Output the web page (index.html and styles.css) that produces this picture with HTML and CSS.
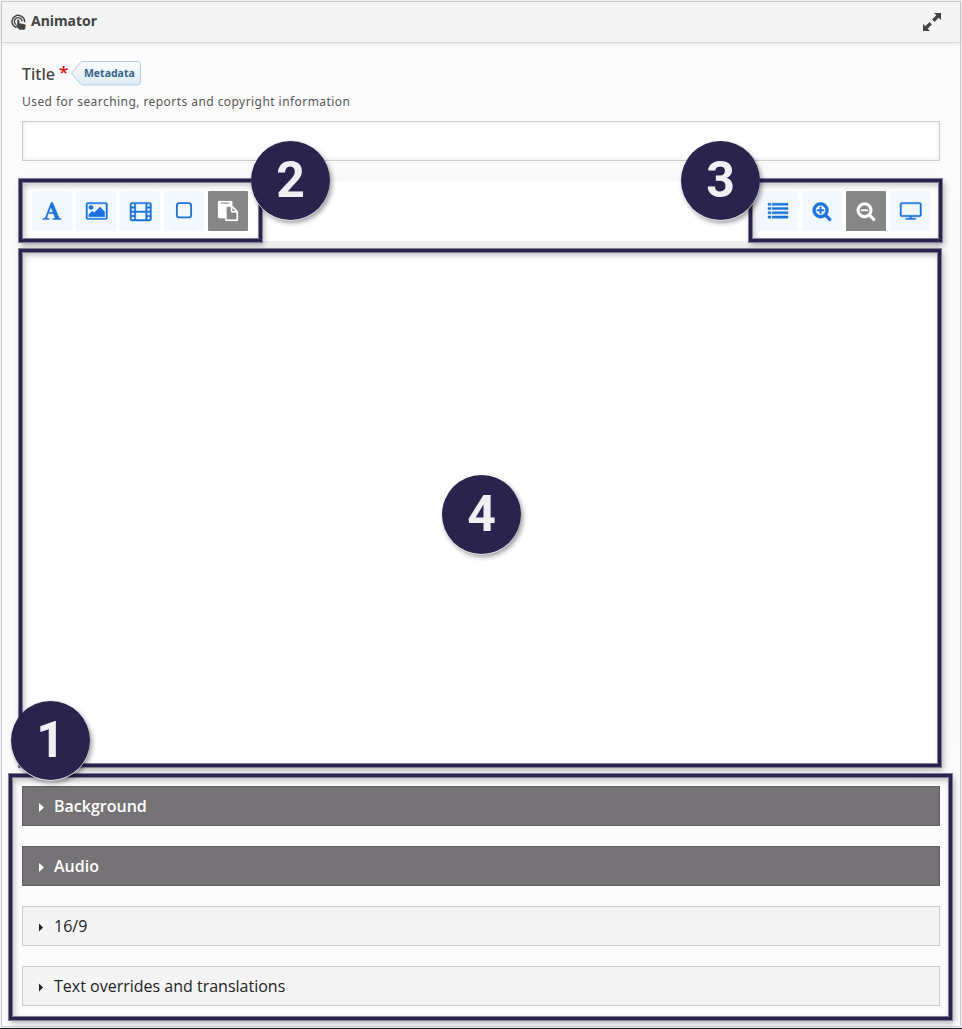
FILE: index.html
```html
<!DOCTYPE html>
<html lang="en">
<head>
<meta charset="utf-8">
<title>Animator</title>
<link rel="stylesheet" href="styles.css">
</head>
<body>
<main class="panel">
  <header class="panel-header">
    <svg class="touch-icon" viewBox="0 0 16 16"><g fill="none" stroke="#444"><path d="M5.400 13.600A6.300 6.300 0 1 1 13.600 8.200" stroke-width="1.500"/><path d="M5.300 10.700A3.800 3.800 0 1 1 11 7.400" stroke-width="1.300"/></g><path fill="#444" d="M6.200 6.700q0-1.100 1.100-1.100t1.100 1.100v2.500l5.200 1q1.200.3 1.100 1.300l-.6 3.300q-.2.900-1.100.9H9q-.6 0-1-.5L4.700 11.900q.5-.9 1.500-.5z"/></svg>
    <h1 class="panel-title">Animator</h1>
    <svg class="expand-icon" viewBox="0 0 20 20"><path fill="#444" d="M12 1h7v7l-2.300-2.300-4.200 4.200-2.400-2.400 4.200-4.200zM1 12l2.300 2.300 4.200-4.200 2.400 2.400-4.200 4.200L8 19H1z"/></svg>
  </header>
  <div class="panel-body">
    <div class="label-row">
      <label class="field-label" for="title">Title</label><span class="required">*</span>
      <span class="tag"><svg class="tag-shape" viewBox="0 0 70 25"><defs><linearGradient id="tagfill" x1="0" y1="0" x2="0" y2="1"><stop offset="0" stop-color="#fdfefe"/><stop offset="1" stop-color="#dcebf5"/></linearGradient></defs><path d="M12 .5H66.500q3 0 3 3v17.500q0 3-3 3H12q-1.500 0-2.500-1L.5 12.500 9.500 1.500Q10.500.5 12 .5z" fill="url(#tagfill)" stroke="#b5cbdc"/></svg><span class="tag-text">Metadata</span></span>
    </div>
    <p class="hint">Used for searching, reports and copyright information</p>
    <input class="text-input" id="title" type="text">
    <section class="editor">
      <div class="toolbar">
        <div class="group">
          <button class="tool"><svg class="icon" viewBox="0 0 1792 1792"><path d="M789 559l-170 450q33 0 136.500 2t160.500 2q19 0 57-2-87-253-184-452zm-725 1105l2-79q23-7 56-12.500t57-10.500 49.500-14.500 44.500-29 31-50.500l237-616 280-724h128q8 14 11 21l205 480q33 78 106 257.500t114 274.500q15 34 58 144.500t72 168.500q20 45 35 57 19 15 88 29.500t84 20.500q6 38 6 57 0 4-.5 13t-.5 13q-63 0-190-8t-191-8q-76 0-215 7t-178 8q0-43 4-78l131-28q1 0 12.500-2.500t15.500-3.500 14.500-4.500 15-6.500 11-8 9-11 2.500-14q0-16-31-96.500t-72-177.500-42-100l-450-2q-26 58-76.500 195.500t-50.500 162.500q0 22 14 37.500t43.500 24.500 48.500 13.500 57 8.500 41 4q1 19 1 58 0 9-2 27-58 0-174.500-10t-174.500-10q-8 0-26.500 4t-21.500 4q-80 14-188 14z"/></svg></button>
          <button class="tool"><svg class="icon wide" viewBox="0 0 1920 1792"><path d="M640 576q0 80-56 136t-136 56-136-56-56-136 56-136 136-56 136 56 56 136zm1024 384v448h-1408v-192l320-320 160 160 512-512zm96-704h-1600q-13 0-22.500 9.500t-9.500 22.500v1216q0 13 9.500 22.500t22.500 9.500h1600q13 0 22.500-9.500t9.500-22.500v-1216q0-13-9.500-22.500t-22.500-9.500zm160 32v1216q0 66-47 113t-113 47h-1600q-66 0-113-47t-47-113v-1216q0-66 47-113t113-47h1600q66 0 113 47t47 113z"/></svg></button>
          <button class="tool"><svg class="icon wide" viewBox="0 0 1920 1792"><path fill-rule="evenodd" d="M160 128H1760q160 0 160 160V1632q0 160-160 160H160Q0 1792 0 1632V288Q0 128 160 128zM192 256q-64 0-64 64v128q0 64 64 64h128q64 0 64-64V320q0-64-64-64zM192 640q-64 0-64 64v128q0 64 64 64h128q64 0 64-64V704q0-64-64-64zM192 1024q-64 0-64 64v128q0 64 64 64h128q64 0 64-64v-128q0-64-64-64zM192 1408q-64 0-64 64v128q0 64 64 64h128q64 0 64-64v-128q0-64-64-64zM1600 256q-64 0-64 64v128q0 64 64 64h128q64 0 64-64V320q0-64-64-64zM1600 640q-64 0-64 64v128q0 64 64 64h128q64 0 64-64V704q0-64-64-64zM1600 1024q-64 0-64 64v128q0 64 64 64h128q64 0 64-64v-128q0-64-64-64zM1600 1408q-64 0-64 64v128q0 64 64 64h128q64 0 64-64v-128q0-64-64-64zM576 256q-64 0-64 64v512q0 64 64 64h768q64 0 64-64V320q0-64-64-64zM576 1024q-64 0-64 64v512q0 64 64 64h768q64 0 64-64v-512q0-64-64-64z"/></svg></button>
          <button class="tool"><svg class="icon" viewBox="0 0 1792 1792"><rect class="outline" x="256" y="192" width="1280" height="1280" rx="224"/></svg></button>
          <button class="tool disabled"><svg class="icon" viewBox="0 0 1792 1792"><path d="M768 1664h896v-640h-416q-40 0-68-28t-28-68v-416h-384v1152zm256-1440v-64q0-13-9.500-22.500t-22.500-9.500h-704q-13 0-22.500 9.500t-9.500 22.500v64q0 13 9.500 22.500t22.500 9.500h704q13 0 22.500-9.500t9.500-22.500zm256 672h299l-299-299v299zm512 128v672q0 40-28 68t-68 28h-960q-40 0-68-28t-28-68v-160h-544q-40 0-68-28t-28-68v-1344q0-40 28-68t68-28h1088q40 0 68 28t28 68v328q21 13 36 28l408 408q28 28 48 76t20 88z"/></svg></button>
        </div>
        <div class="group">
          <button class="tool"><svg class="icon" viewBox="0 0 1792 1792"><path d="M0 192h256v192H0zM384 192h1408v192H384zM0 576h256v192H0zM384 576h1408v192H384zM0 960h256v192H0zM384 960h1408v192H384zM0 1344h256v192H0zM384 1344h1408v192H384z"/></svg></button>
          <button class="tool"><svg class="icon" viewBox="0 0 1792 1792"><path d="M1088 800v64q0 32-32 32h-224v224q0 32-32 32h-64q-32 0-32-32v-224h-224q-32 0-32-32v-64q0-32 32-32h224v-224q0-32 32-32h64q32 0 32 32v224h224q32 0 32 32zm128 32q0-185-131.500-316.500t-316.500-131.500-316.500 131.500-131.500 316.500 131.500 316.500 316.500 131.500 316.500-131.500 131.500-316.500zm512 832q0 53-37.500 90.500t-90.500 37.500q-54 0-90-38l-343-342q-179 124-399 124-143 0-273.500-55.500t-225-150-150-225-55.500-273.500 55.500-273.500 150-225 225-150 273.500-55.500 273.500 55.500 225 150 150 225 55.500 273.500q0 220-124 399l343 343q37 37 37 90z"/></svg></button>
          <button class="tool disabled"><svg class="icon" viewBox="0 0 1792 1792"><path d="M1088 800v64q0 32-32 32h-576q-32 0-32-32v-64q0-32 32-32h576q32 0 32 32zm128 32q0-185-131.500-316.500t-316.500-131.500-316.500 131.500-131.500 316.500 131.500 316.500 316.500 131.500 316.500-131.500 131.500-316.500zm512 832q0 53-37.500 90.500t-90.500 37.500q-54 0-90-38l-343-342q-179 124-399 124-143 0-273.500-55.500t-225-150-150-225-55.500-273.500 55.500-273.500 150-225 225-150 273.500-55.500 273.500 55.500 225 150 150 225 55.500 273.500q0 220-124 399l343 343q37 37 37 90z"/></svg></button>
          <button class="tool"><svg class="icon wide" viewBox="0 0 1920 1792"><path d="M1792 1248v-960q0-32-32-32h-1600q-32 0-32 32v960q0 32 32 32h1600q32 0 32-32zm128-960v960q0 66-47 113t-113 47h-736v128h352q32 0 32 32v64q0 32-32 32h-832q-32 0-32-32v-64q0-32 32-32h352v-128h-736q-66 0-113-47t-47-113v-960q0-66 47-113t113-47h1600q66 0 113 47t47 113z"/></svg></button>
        </div>
      </div>
      <div class="canvas"></div>
    </section>
    <section class="sections">
      <div class="bar dark"><svg class="caret" viewBox="0 0 5 9"><path d="M0 0l5 4.500L0 9z"/></svg>Background</div>
      <div class="bar dark"><svg class="caret" viewBox="0 0 5 9"><path d="M0 0l5 4.500L0 9z"/></svg>Audio</div>
      <div class="bar"><svg class="caret" viewBox="0 0 5 9"><path d="M0 .5l4 4L0 8.500z"/></svg>16/9</div>
      <div class="bar"><svg class="caret" viewBox="0 0 5 9"><path d="M0 .5l4 4L0 8.500z"/></svg>Text overrides and translations</div>
    </section>
  </div>
</main>
<div class="frame frame-tools"></div>
<div class="frame frame-view"></div>
<div class="frame frame-canvas"></div>
<div class="frame frame-sections"></div>
<div class="marker marker-1">1</div>
<div class="marker marker-2">2</div>
<div class="marker marker-3">3</div>
<div class="marker marker-4">4</div>
</body>
</html>
```
FILE: styles.css
```css
* { box-sizing: border-box; }
html { background: #f4f4f4; }
body {
  margin: 0;
  height: 1029px;
  padding: 1px 1px 0;
  position: relative;
  overflow: hidden;
  border-bottom: 1px solid #15131f;
  font-family: "Open Sans", "Noto Sans", sans-serif;
  color: #222;
}
.panel {
  height: 1026px;
  border: 1px solid #ccc;
  background: #fcfcfc;
}
.panel-header {
  display: flex;
  align-items: center;
  height: 41px;
  padding: 0 18px 1px 9px;
  background: #f4f4f4;
  border-bottom: 1px solid #d8d8d8;
  box-shadow: 0 1px 4px rgba(0, 0, 0, .1);
}
.touch-icon { width: 16px; height: 16px; margin-right: 4px; }
.panel-title { margin: 0; padding-bottom: 1px; font: 700 14px/20px "Noto Sans", sans-serif; color: #444; }
.expand-icon { width: 20px; height: 20px; margin-left: auto; }
.panel-body { padding: 18px 20px 0; }
.label-row { display: flex; height: 25px; }
.field-label { font: 500 16px/27px "Noto Sans", sans-serif; color: #444; }
.required { width: 9px; margin-left: 4px; font: 500 17px/21px "Noto Sans", sans-serif; color: #d00; }
.tag { position: relative; width: 70px; height: 25px; margin-left: 3px; padding-left: 13px; }
.tag-shape { position: absolute; left: 0; top: 0; width: 70px; height: 25px; }
.tag-text { position: relative; display: block; font: 700 10.500px/25px "Noto Sans", sans-serif; color: #36648b; }
.hint { margin: 7px 0 11px; font: 12px/17px "Noto Sans", sans-serif; letter-spacing: .44px; color: #555; }
.text-input {
  display: block;
  width: 918px;
  height: 40px;
  border: 1px solid #ccc;
  background: #fff;
  box-shadow: inset 0 0 5px rgba(0, 0, 0, .1);
}
.editor { margin-top: 20px; background: #eee; box-shadow: 0 0 40px rgba(0, 0, 0, .035); }
.toolbar { display: flex; justify-content: space-between; height: 60px; padding: 10px; background: #fff; }
.group { display: flex; gap: 4px; }
.tool {
  display: flex;
  align-items: center;
  justify-content: center;
  width: 40px;
  height: 40px;
  padding: 0;
  border: 0;
  border-radius: 1px;
  background: #f2f8fd;
  color: #1a73e0;
}
.tool.disabled { background: #868686; color: #fff; }
.icon { width: 20px; height: 20px; fill: currentColor; stroke: currentColor; stroke-width: 40; overflow: visible; }
.disabled .icon { stroke-width: 20; }
.icon .outline { fill: none; stroke-width: 165; }
.icon.wide { flex: none; width: 21.430px; margin-left: 2px; }
.canvas { height: 516px; margin-top: 10px; background: #fff; }
.sections { display: flex; flex-direction: column; gap: 20px; margin-top: 19px; }
.bar {
  display: flex;
  align-items: center;
  height: 40px;
  padding-left: 16px;
  border: 1px solid #ccc;
  background: #f4f4f4;
  font-size: 16px;
}
.bar.dark { border-color: #605e60; background: #757375; color: #fff; font-weight: 600; }
.caret { width: 5px; height: 9px; margin: 2px 10px 0 0; fill: currentColor; }
.frame {
  position: absolute;
  border: 3px solid #29234d;
  box-shadow: 0 0 0 1px #817d98, inset 0 0 0 1px #817d98, 2px 3px 6px rgba(0, 0, 0, .3), inset 2px 3px 6px rgba(0, 0, 0, .27);
}
.frame-tools { left: 19px; top: 179px; width: 243px; height: 63px; }
.frame-view { left: 749px; top: 179px; width: 193px; height: 63px; }
.frame-canvas { left: 19px; top: 249px; width: 922px; height: 518px; }
.frame-sections { left: 9px; top: 774px; width: 943px; height: 246px; }
.marker {
  position: absolute;
  width: 79px;
  height: 79px;
  border-radius: 50%;
  background: #29234d;
  color: #f0f0f2;
  text-align: center;
  font: 700 50px/79px Roboto, "Liberation Sans", sans-serif;
  box-shadow: 0 1px 0 #e4e4ea, 2px 3px 5px rgba(0, 0, 0, .4);
}
.marker-1 { left: 11px; top: 701px; }
.marker-2 { left: 251px; top: 141px; }
.marker-3 { left: 681px; top: 141px; }
.marker-4 { left: 442px; top: 475px; }
```
